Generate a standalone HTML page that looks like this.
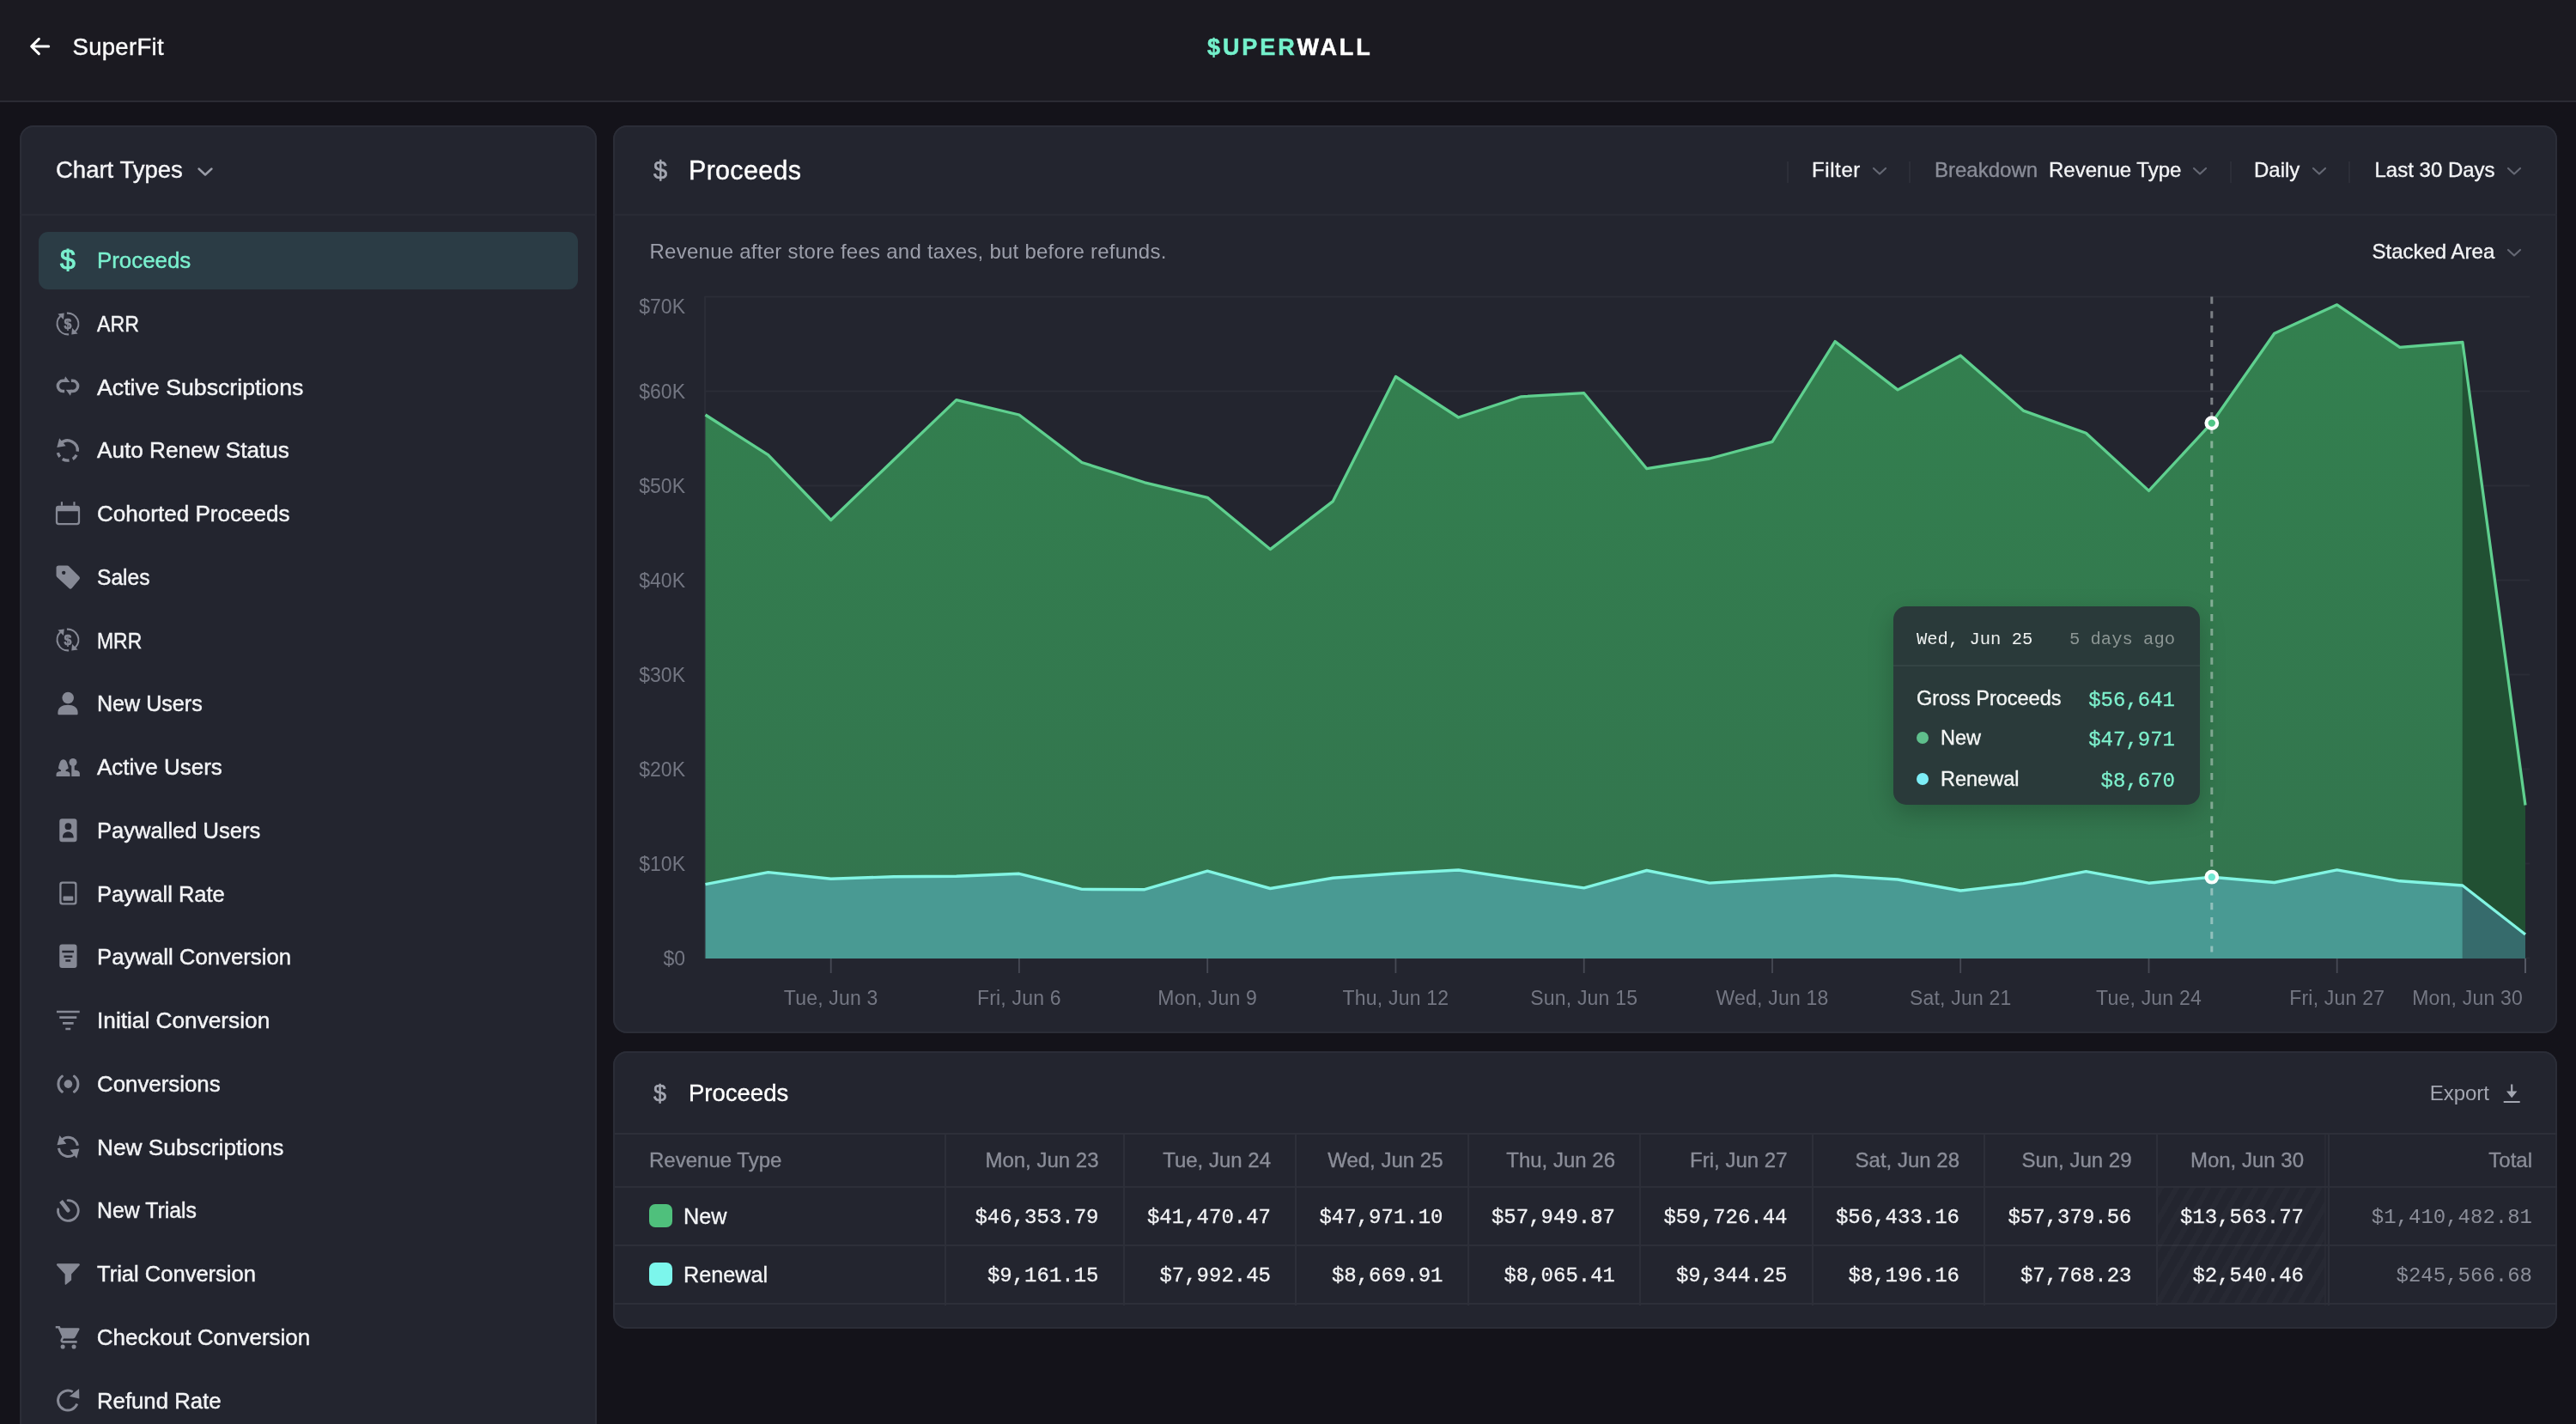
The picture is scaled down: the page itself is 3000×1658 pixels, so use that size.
<!DOCTYPE html>
<html lang="en"><head><meta charset="utf-8"><title>Superwall – Proceeds</title>
<style>
*{box-sizing:border-box;margin:0;padding:0}
html,body{width:3000px;height:1658px;overflow:hidden;background:#14131a;font-family:"Liberation Sans",sans-serif;color:#f3f4f6}
#root{position:absolute;left:0;top:0;width:3000px;height:1658px;overflow:hidden;will-change:transform}
.hdr{position:absolute;left:0;top:0;width:3000px;height:119px;background:#1b1a21;border-bottom:2px solid #2b2b34}
.back{position:absolute;left:30px;top:38px;width:32px;height:32px;color:#fff}
.app{position:absolute;left:84.500px;top:37px;font-size:27.500px;line-height:36px;color:#fafafa;letter-spacing:.3px;-webkit-text-stroke:.4px currentColor}
.logo{position:absolute;left:1406px;top:36px;font-size:27px;line-height:38px;font-weight:bold;letter-spacing:2.900px;color:#fff;white-space:nowrap;-webkit-text-stroke:.5px currentColor}
.logo b{color:#74f0cb}
.panel{position:absolute;background:#23252f;box-shadow:inset 0 0 0 2px #2b2d37;border-radius:16px}
.side{left:23px;top:146px;width:671.500px;height:1560px}
.side .hd{position:absolute;left:0;top:0;width:100%;height:105px;border-bottom:2px solid #292b35}
.side .hd .t{position:absolute;left:42px;top:34px;font-size:27.500px;line-height:36px;color:#f5f5f7;-webkit-text-stroke:.4px currentColor}
.side .hd .chev{position:absolute;left:206px;top:48px;width:20px;height:12px;color:#9a9da8}
.it{position:absolute;left:21.500px;width:628px;height:67px;border-radius:11px}
.it.sel{background:#2b3c45}
.it .ico{position:absolute;left:18px;top:16.500px;width:32px;height:32px;color:#868995}
.it .dol{font-size:32px;line-height:32px;font-weight:normal;-webkit-text-stroke:1px currentColor;color:#7af0ce;text-align:center;top:15.500px;left:18.500px}
.it .lb{position:absolute;left:68.200px;top:14.900px;font-size:26px;line-height:36px;white-space:nowrap;color:#f3f4f6;-webkit-text-stroke:.45px currentColor;transform-origin:0 50%}
.it.sel .lb{color:#7af0ce}
.cp{left:714px;top:146px;width:2264px;height:1057px}
.cp .hd{position:absolute;left:0;top:0;width:100%;height:105px;border-bottom:2px solid #292b35}
.ttl{position:absolute;font-size:30.500px;letter-spacing:.3px;line-height:40px;color:#fff;white-space:nowrap;-webkit-text-stroke:.35px currentColor}
.tdol{position:absolute;font-size:29px;line-height:40px;color:#a4a7b2;-webkit-text-stroke:.6px #a4a7b2}
.ctl{position:absolute;top:33.500px;font-size:24px;line-height:36px;white-space:nowrap;color:#f3f4f6;-webkit-text-stroke:.35px currentColor}
.ctl.g{color:#8a8d98}
.cchev{position:absolute;width:18px;height:11px;color:#656874;margin-top:1px}
.sep{position:absolute;top:42px;width:2px;height:25px;background:#2c2e38}
.desc{position:absolute;left:42.500px;top:128.800px;letter-spacing:.25px;font-size:24px;line-height:36px;color:#9c9fab;white-space:nowrap}
.chart{position:absolute;left:0;top:0}
.ax{font-family:"Liberation Sans",sans-serif;font-size:23px;fill:#737682}
.tip{position:absolute;left:2205px;top:706px;width:357px;height:231px;border-radius:15px;background:#2a3a3a;box-shadow:0 10px 30px rgba(0,0,0,.22)}
.xa{font-size:23px;letter-spacing:.2px;fill:#747783}
.tip .th{position:absolute;left:0;top:0;width:100%;height:70px;border-bottom:2px solid rgba(255,255,255,.05)}
.mono{font-family:"Liberation Mono",monospace}
.tip .d{position:absolute;left:27px;top:23px;font-size:20.500px;line-height:32px;color:#eef1f0;white-space:nowrap}
.tip .ago{position:absolute;right:29px;top:23px;font-size:20.500px;line-height:32px;color:#8c9694;white-space:nowrap}
.tip .r{position:absolute;left:27px;right:29px;height:36px}
.tip .r .l{position:absolute;left:0;top:0;font-size:23.500px;line-height:36px;color:#f4f6f5;white-space:nowrap;-webkit-text-stroke:.35px currentColor}
.tip .r .v{position:absolute;right:0;top:3px;font-size:24px;line-height:36px;color:#7df0cc;white-space:nowrap;-webkit-text-stroke:.3px #7df0cc}
.tip .dot{position:absolute;left:0;top:11px;width:14px;height:14px;border-radius:50%}
.tp{left:714px;top:1224px;width:2264px;height:323px;overflow:hidden}
.vl{position:absolute;top:95px;width:2px;height:201px;background:#2d2f39}
.hl{position:absolute;left:2px;right:0;height:2px;background:#2d2f39}
.c{position:absolute;height:40px;line-height:40px;white-space:nowrap;text-align:right}
.c.th{font-size:24px;color:#8b8e99;-webkit-text-stroke:.35px currentColor}
.c.num{font-family:"Liberation Mono",monospace;font-size:24px;color:#f1f2f4;-webkit-text-stroke:.3px #f1f2f4;margin-top:1px}
.c.num.tot{color:#8b8e99;-webkit-text-stroke:0}
.hatch{position:absolute;background:repeating-linear-gradient(120deg,rgba(255,255,255,.02) 0 6px,rgba(255,255,255,0) 6px 16px)}
.sw{position:absolute;left:42px;width:27px;height:27px;border-radius:7px}
.rl{position:absolute;left:82px;font-size:25.200px;line-height:40px;color:#f3f4f6;-webkit-text-stroke:.35px currentColor}
.exp{position:absolute;right:79px;top:28.500px;font-size:24px;line-height:40px;color:#a4a7b2}
</style></head>
<body>
<div id="root">
<div class="hdr">
<svg class="back" viewBox="0 0 24 24"><path fill="none" stroke="currentColor" stroke-width="2.300" stroke-linecap="round" stroke-linejoin="round" d="M20 12H5.500M11.500 5.500L5 12l6.500 6.500"/></svg>
<div class="app">SuperFit</div>
<div class="logo"><b>$UPER</b>WALL</div>
</div>

<div class="panel side">
<div class="hd"><div class="t">Chart Types</div><svg class="chev" viewBox="0 0 20 12"><path d="M2.500 2.500L10 9.500l7.500-7" fill="none" stroke="currentColor" stroke-width="2.400" stroke-linecap="round" stroke-linejoin="round"/></svg></div>
<div class="it sel" style="top:124.30px"><span class="ico dol">$</span><span class="lb" style="transform:scaleX(0.995)">Proceeds</span></div>
<div class="it" style="top:198.05px"><svg class="ico" viewBox="0 0 24 24"><path fill="none" stroke="currentColor" stroke-width="1.6" stroke-linecap="butt" d="M12.81 21.26A9.3 9.3 0 0 1 5.54 5.31 M11.19 2.74A9.3 9.3 0 0 1 18.46 18.69"/><path fill="currentColor" d="M3.3 3.3L8.8 2.7L8.2 8.2ZM20.7 20.7L15.2 21.3L15.8 15.8Z"/><text x="12" y="16.3" text-anchor="middle" font-family="Liberation Sans, sans-serif" font-weight="bold" font-size="12" fill="currentColor" stroke="currentColor" stroke-width=".4">$</text></svg><span class="lb" style="transform:scaleX(0.891)">ARR</span></div>
<div class="it" style="top:271.80px"><svg class="ico" viewBox="0 0 24 24"><path fill="none" stroke="currentColor" stroke-width="2.6" stroke-linecap="butt" d="M14.9 7H16.2A4.55 4.55 0 0 1 16.2 16.1H14.5 M9.1 16.1H7.8A4.55 4.55 0 0 1 7.8 7H9.5"/><path fill="currentColor" d="M8.2 8.3L9.8 3.1L13.7 8.3ZM15.8 14.8L14.2 20L10.3 14.8Z"/></svg><span class="lb" style="transform:scaleX(1.027)">Active Subscriptions</span></div>
<div class="it" style="top:345.55px"><svg class="ico" viewBox="0 0 24 24"><path fill="none" stroke="currentColor" stroke-width="2.5" stroke-linecap="butt" d="M5.98 5.93A8.7 8.7 0 0 1 20.47 13.16 M19.55 16.35A8.7 8.7 0 0 1 16.28 19.86 M13.16 20.99A8.7 8.7 0 0 1 7.32 19.86 M5.04 17.88A8.7 8.7 0 0 1 3.32 14.36"/><path fill="currentColor" d="M4.6 1.7L2.5 9.8L10.2 8.5Z"/></svg><span class="lb" style="transform:scaleX(1.006)">Auto Renew Status</span></div>
<div class="it" style="top:419.30px"><svg class="ico" viewBox="0 0 24 24"><path fill="currentColor" fill-rule="evenodd" d="M3.9 5.1H20.1A2.5 2.5 0 0 1 22.6 7.6V19.4A2.5 2.5 0 0 1 20.1 21.9H3.9A2.5 2.5 0 0 1 1.4 19.4V7.6A2.5 2.5 0 0 1 3.9 5.1ZM3.1 9.9V19.2A1.1 1.1 0 0 0 4.2 20.3H19.8A1.1 1.1 0 0 0 20.9 19.2V9.9ZM5.9 1.7H7.5V5.2H5.9ZM16.8 1.7H18.4V5.2H16.800Z"/></svg><span class="lb" style="transform:scaleX(1.002)">Cohorted Proceeds</span></div>
<div class="it" style="top:493.05px"><svg class="ico" viewBox="0 0 24 24"><path fill="currentColor" fill-rule="evenodd" d="M4 1.9H11.5A2.2 2.2 0 0 1 13.050 2.550L21.900 11.400A1.9 1.9 0 0 1 21.900 14.100L15.600 21.500A1.9 1.9 0 0 1 12.900 21.600L2.550 12.050A2.2 2.2 0 0 1 1.900 10.500V4A2.1 2.1 0 0 1 4 1.900ZM8.400 6.500A1.650 1.650 0 1 0 8.400 9.800A1.650 1.650 0 1 0 8.400 6.500Z"/></svg><span class="lb" style="transform:scaleX(0.945)">Sales</span></div>
<div class="it" style="top:566.80px"><svg class="ico" viewBox="0 0 24 24"><path fill="none" stroke="currentColor" stroke-width="1.6" stroke-linecap="butt" d="M12.81 21.26A9.3 9.3 0 0 1 5.54 5.31 M11.19 2.74A9.3 9.3 0 0 1 18.46 18.69"/><path fill="currentColor" d="M3.3 3.3L8.8 2.7L8.2 8.2ZM20.7 20.7L15.2 21.3L15.8 15.8Z"/><text x="12" y="16.3" text-anchor="middle" font-family="Liberation Sans, sans-serif" font-weight="bold" font-size="12" fill="currentColor" stroke="currentColor" stroke-width=".4">$</text></svg><span class="lb" style="transform:scaleX(0.882)">MRR</span></div>
<div class="it" style="top:640.55px"><svg class="ico" viewBox="0 0 24 24"><circle cx="12.15" cy="7.1" r="5.1" fill="currentColor"/><path fill="currentColor" d="M3.3 21.2V19.8C3.3 15.9 7 13.4 12 13.4S20.7 15.9 20.7 19.8V21.2A.8 .8 0 0 1 19.9 22H4.1A.8 .8 0 0 1 3.3 21.2Z"/></svg><span class="lb" style="transform:scaleX(0.965)">New Users</span></div>
<div class="it" style="top:714.30px"><svg class="ico" viewBox="0 0 24 24"><path fill="currentColor" d="M8.1 5.4C10.6 5.4 11.6 8.2 12.6 13.2C11.4 14.2 10.6 14.4 10.2 14.6V15.8C12.6 16 13.9 16.9 13.9 18.300V20.2H1.9V18.300C1.9 16.900 3.4 16 6 15.800V14.600C5.4 14.400 4.600 14.200 3.700 13.200C4.600 8.200 5.600 5.400 8.100 5.400Z"/><circle cx="16.5" cy="7.9" r="3.4" fill="currentColor"/><path fill="currentColor" d="M15.2 10.5H17.8V14.6C20.6 14.800 22.4 15.900 22.4 17.600V20.2H15.2Z"/></svg><span class="lb" style="transform:scaleX(0.999)">Active Users</span></div>
<div class="it" style="top:788.05px"><svg class="ico" viewBox="0 0 24 24"><path fill="currentColor" fill-rule="evenodd" d="M7.0 1.6H17.599999999999998A2.3 2.3 0 0 1 19.9 3.9V19.7A2.3 2.3 0 0 1 17.599999999999998 22H7.0A2.3 2.3 0 0 1 4.7 19.7V3.9A2.3 2.3 0 0 1 7.0 1.6ZM12.3 5.5A2.9 2.9 0 1 0 12.3 11.3A2.9 2.9 0 1 0 12.3 5.5ZM7.5 18.4V17.6C7.5 14.8 9.6 13.1 12.3 13.1S17 14.8 17 17.600V18.400Z"/></svg><span class="lb" style="transform:scaleX(0.983)">Paywalled Users</span></div>
<div class="it" style="top:861.80px"><svg class="ico" viewBox="0 0 24 24"><path fill="currentColor" fill-rule="evenodd" d="M7.2 1.9H17.4A2.5 2.5 0 0 1 19.9 4.4V19.6A2.5 2.5 0 0 1 17.4 22.1H7.2A2.5 2.5 0 0 1 4.7 19.6V4.4A2.5 2.5 0 0 1 7.2 1.9ZM7.6000000000000005 3.6H17.0A1.2 1.2 0 0 1 18.2 4.8V19.2A1.2 1.2 0 0 1 17.0 20.4H7.6000000000000005A1.2 1.2 0 0 1 6.4 19.2V4.8A1.2 1.2 0 0 1 7.6000000000000005 3.6ZM8.5 14.7H16.099999999999998A0.6 0.6 0 0 1 16.7 15.299999999999999V17.9A0.6 0.6 0 0 1 16.099999999999998 18.5H8.5A0.6 0.6 0 0 1 7.9 17.9V15.299999999999999A0.6 0.6 0 0 1 8.5 14.7Z"/></svg><span class="lb" style="transform:scaleX(0.98)">Paywall Rate</span></div>
<div class="it" style="top:935.55px"><svg class="ico" viewBox="0 0 24 24"><path fill="currentColor" fill-rule="evenodd" d="M7.0 1.2H17.599999999999998A2.3 2.3 0 0 1 19.9 3.5V19.5A2.3 2.3 0 0 1 17.599999999999998 21.8H7.0A2.3 2.3 0 0 1 4.7 19.5V3.5A2.3 2.3 0 0 1 7.0 1.2ZM7 6.500H17.300V8.500H7ZM8.600 10.800H16V12.800H8.600ZM10 14.400H14.400V16.400H10Z"/></svg><span class="lb" style="transform:scaleX(0.99)">Paywall Conversion</span></div>
<div class="it" style="top:1009.30px"><svg class="ico" viewBox="0 0 24 24"><path fill="currentColor" d="M2.2 3.500H22.300V5.500H2.200ZM4.700 8.450H19.700V10.450H4.700ZM7.500 13.500H17V15.500H7.500ZM10 18.500H14.400V20.500H10Z"/></svg><span class="lb" style="transform:scaleX(1.009)">Initial Conversion</span></div>
<div class="it" style="top:1083.05px"><svg class="ico" viewBox="0 0 24 24"><circle cx="12.3" cy="12.1" r="3.6" fill="currentColor"/><path fill="none" stroke="currentColor" stroke-width="2.3" stroke-linecap="round" d="M7.01 18.88A8.6 8.6 0 0 1 7.01 5.32 M17.59 5.32A8.6 8.6 0 0 1 17.59 18.88"/></svg><span class="lb" style="transform:scaleX(0.994)">Conversions</span></div>
<div class="it" style="top:1156.80px"><svg class="ico" viewBox="0 0 24 24"><path fill="none" stroke="currentColor" stroke-width="2.3" stroke-linecap="butt" d="M5.26 7.85A8.3 8.3 0 0 1 20.52 11.09 M19.34 16.65A8.3 8.3 0 0 1 4.08 13.41"/><path fill="currentColor" d="M13.9 14.9L22 13.9L19.7 22.3ZM10.7 9.600L2.600 10.600L4.900 2.200Z"/></svg><span class="lb" style="transform:scaleX(1.01)">New Subscriptions</span></div>
<div class="it" style="top:1230.55px"><svg class="ico" viewBox="0 0 24 24"><path fill="none" stroke="currentColor" stroke-width="2.1" stroke-linecap="round" d="M11.99 3.51A8.9 8.9 0 1 1 3.49 11.16"/><path fill="currentColor" d="M4.6 5.200L7.400 3L13.700 11.200A1.800 1.800 0 0 1 11 13.500Z"/></svg><span class="lb" style="transform:scaleX(0.956)">New Trials</span></div>
<div class="it" style="top:1304.30px"><svg class="ico" viewBox="0 0 24 24"><path fill="currentColor" d="M3.1 3.2H21.5A.9 .9 0 0 1 22.200 4.700L15.100 12.300V17.600L10.300 21.500A.5 .5 0 0 1 9.500 21.100V12.300L2.400 4.700A.9 .9 0 0 1 3.100 3.200Z"/></svg><span class="lb" style="transform:scaleX(0.982)">Trial Conversion</span></div>
<div class="it" style="top:1378.05px"><svg class="ico" viewBox="0 0 24 24"><path fill="currentColor" d="M7.6 18.300a1.900 1.900 0 1 0 0 3.800 1.900 1.900 0 0 0 0-3.800zM1.300 2.200v2h2.200l3.400 7.400-1.100 2.300c-.7 1.500.3 3.100 1.900 3.100h12.300v-2H7.700c-.2 0-.3-.2-.200-.4l.8-1.500h8.300c.8 0 1.500-.4 1.800-1.100l3.700-6.700c.3-.600-.1-1.300-.8-1.300H5.800l-.9-1.800H1.300zm16 16.100a1.900 1.900 0 1 0 0 3.800 1.900 1.900 0 0 0 0-3.800z"/></svg><span class="lb" style="transform:scaleX(1.0)">Checkout Conversion</span></div>
<div class="it" style="top:1451.80px"><svg class="ico" viewBox="0 0 24 24"><path fill="none" stroke="currentColor" stroke-width="2.2" stroke-linecap="butt" d="M20.08 15.34A8.6 8.6 0 1 1 16.30 4.95"/><path fill="currentColor" d="M13.400 8.800L21.800 2.200L22 10.800Z"/></svg><span class="lb" style="transform:scaleX(0.99)">Refund Rate</span></div>

</div>

<div class="panel cp">
<div class="hd">
<div class="tdol" style="left:47px;top:32px">$</div>
<div class="ttl" style="left:88px;top:31.500px">Proceeds</div>
<div class="sep" style="left:1367px"></div>
<div class="ctl" style="left:1396px;letter-spacing:.6px">Filter</div>
<div class="sep" style="left:1509px"></div>
<div class="ctl g" style="left:1539px">Breakdown</div>
<div class="ctl" style="left:1672px">Revenue Type</div>
<div class="sep" style="left:1883px"></div>
<div class="ctl" style="left:1911px">Daily</div>
<div class="sep" style="left:2021px"></div>
<div class="ctl" style="left:2051.500px">Last 30 Days</div>
</div>
<svg class="cchev" style="left:1466.4px;top:47.2px" viewBox="0 0 18 11"><path d="M2 2l7 6.500L16 2" fill="none" stroke="currentColor" stroke-width="2.200" stroke-linecap="round" stroke-linejoin="round"/></svg><svg class="cchev" style="left:1838.9px;top:47.2px" viewBox="0 0 18 11"><path d="M2 2l7 6.500L16 2" fill="none" stroke="currentColor" stroke-width="2.200" stroke-linecap="round" stroke-linejoin="round"/></svg><svg class="cchev" style="left:1977.9px;top:47.2px" viewBox="0 0 18 11"><path d="M2 2l7 6.500L16 2" fill="none" stroke="currentColor" stroke-width="2.200" stroke-linecap="round" stroke-linejoin="round"/></svg><svg class="cchev" style="left:2204.7px;top:47.2px" viewBox="0 0 18 11"><path d="M2 2l7 6.500L16 2" fill="none" stroke="currentColor" stroke-width="2.200" stroke-linecap="round" stroke-linejoin="round"/></svg><svg class="cchev" style="left:2204.7px;top:142.4px" viewBox="0 0 18 11"><path d="M2 2l7 6.500L16 2" fill="none" stroke="currentColor" stroke-width="2.200" stroke-linecap="round" stroke-linejoin="round"/></svg>
<div class="desc">Revenue after store fees and taxes, but before refunds.</div>
<div class="ctl" style="left:2048.500px;top:129px">Stacked Area</div>
</div>
<svg class="chart" width="3000" height="1658" viewBox="0 0 3000 1658">
<defs>
<linearGradient id="gg" x1="0" y1="345" x2="0" y2="1116" gradientUnits="userSpaceOnUse"><stop offset="0" stop-color="#33804f"/><stop offset="1" stop-color="#33744e"/></linearGradient>
</defs>
<line x1="821" x2="2946" y1="345.5" y2="345.5" stroke="#2b2d37" stroke-width="2"/><line x1="821" x2="2946" y1="455.5" y2="455.5" stroke="#2b2d37" stroke-width="2"/><line x1="821" x2="2946" y1="565.5" y2="565.5" stroke="#2b2d37" stroke-width="2"/><line x1="821" x2="2946" y1="675.5" y2="675.5" stroke="#2b2d37" stroke-width="2"/><line x1="821" x2="2946" y1="785.5" y2="785.5" stroke="#2b2d37" stroke-width="2"/><line x1="821" x2="2946" y1="895.5" y2="895.5" stroke="#2b2d37" stroke-width="2"/><line x1="821" x2="2946" y1="1005.5" y2="1005.5" stroke="#2b2d37" stroke-width="2"/><line x1="821" x2="2946" y1="1115.5" y2="1115.5" stroke="#2b2d37" stroke-width="2"/>
<line x1="821" x2="821" y1="345" y2="1116" stroke="#2b2d37" stroke-width="2"/>
<path d="M821.5,483.0 L894.6,529.7 L967.7,605.5 L1040.8,535.5 L1113.8,465.6 L1186.9,483.0 L1260.0,538.5 L1333.1,561.8 L1406.2,579.3 L1479.3,639.6 L1552.4,583.6 L1625.4,438.5 L1698.5,486.0 L1771.6,461.8 L1844.7,457.7 L1917.8,545.7 L1990.9,534.0 L2064.0,514.3 L2137.1,397.6 L2210.1,453.9 L2283.2,414.0 L2356.3,478.1 L2429.4,504.3 L2502.5,571.4 L2575.6,492.7 L2648.7,388.3 L2721.7,354.8 L2794.8,404.3 L2867.9,398.5 L2867.9,1031.0 L2794.8,1025.8 L2721.7,1012.9 L2648.7,1027.5 L2575.6,1021.2 L2502.5,1028.2 L2429.4,1014.6 L2356.3,1028.6 L2283.2,1037.0 L2210.1,1024.0 L2137.1,1019.4 L2064.0,1023.7 L1990.9,1028.1 L1917.8,1013.5 L1844.7,1033.9 L1771.6,1023.7 L1698.5,1013.0 L1625.4,1017.0 L1552.4,1022.3 L1479.3,1034.5 L1406.2,1014.1 L1333.1,1035.7 L1260.0,1035.4 L1186.9,1017.3 L1113.8,1020.2 L1040.8,1020.8 L967.7,1023.2 L894.6,1015.6 L821.5,1029.6 Z" fill="url(#gg)"/>
<path d="M2867.9,398.5 L2941.0,937.5 L2941.0,1088.0 L2867.9,1031.0 Z" fill="#215033"/>
<path d="M821.5,1116.0 L821.5,1029.6 L894.6,1015.6 L967.7,1023.2 L1040.8,1020.8 L1113.8,1020.2 L1186.9,1017.3 L1260.0,1035.4 L1333.1,1035.7 L1406.2,1014.1 L1479.3,1034.5 L1552.4,1022.3 L1625.4,1017.0 L1698.5,1013.0 L1771.6,1023.7 L1844.7,1033.9 L1917.8,1013.5 L1990.9,1028.1 L2064.0,1023.7 L2137.1,1019.4 L2210.1,1024.0 L2283.2,1037.0 L2356.3,1028.6 L2429.4,1014.6 L2502.5,1028.2 L2575.6,1021.2 L2648.7,1027.5 L2721.7,1012.9 L2794.8,1025.8 L2867.9,1031.0 L2867.9,1116.0 Z" fill="#499a93"/>
<path d="M2867.9,1116.0 L2867.9,1031.0 L2941.0,1088.0 L2941.0,1116.0 Z" fill="#366b6c"/>
<polyline points="821.5,483.0 894.6,529.7 967.7,605.5 1040.8,535.5 1113.8,465.6 1186.9,483.0 1260.0,538.5 1333.1,561.8 1406.2,579.3 1479.3,639.6 1552.4,583.6 1625.4,438.5 1698.5,486.0 1771.6,461.8 1844.7,457.7 1917.8,545.7 1990.9,534.0 2064.0,514.3 2137.1,397.6 2210.1,453.9 2283.2,414.0 2356.3,478.1 2429.4,504.3 2502.5,571.4 2575.6,492.7 2648.7,388.3 2721.7,354.8 2794.8,404.3 2867.9,398.5 2941.0,937.5" fill="none" stroke="#5fd08f" stroke-width="3.300" stroke-linejoin="round"/>
<polyline points="821.5,1029.6 894.6,1015.6 967.7,1023.2 1040.8,1020.8 1113.8,1020.2 1186.9,1017.3 1260.0,1035.4 1333.1,1035.7 1406.2,1014.1 1479.3,1034.5 1552.4,1022.3 1625.4,1017.0 1698.5,1013.0 1771.6,1023.7 1844.7,1033.9 1917.8,1013.5 1990.9,1028.1 2064.0,1023.7 2137.1,1019.4 2210.1,1024.0 2283.2,1037.0 2356.3,1028.6 2429.4,1014.6 2502.5,1028.2 2575.6,1021.2 2648.7,1027.5 2721.7,1012.9 2794.8,1025.8 2867.9,1031.0 2941.0,1088.0" fill="none" stroke="#82f5e3" stroke-width="3.400" stroke-linejoin="round"/>
<line x1="2575.800" x2="2575.800" y1="345.500" y2="1108.500" stroke="#e8f0f0" stroke-opacity="0.45" stroke-width="3" stroke-dasharray="8.200 8.600"/>
<circle cx="2575.800" cy="492.600" r="6.300" fill="#4fc585" stroke="#fbfffd" stroke-width="4.200"/>
<circle cx="2575.800" cy="1021.200" r="6.300" fill="#6fe8d2" stroke="#fbfffd" stroke-width="4.200"/>
<line x1="967.7" x2="967.7" y1="1116" y2="1133" stroke="#474a55" stroke-width="1.800"/><line x1="1186.9" x2="1186.9" y1="1116" y2="1133" stroke="#474a55" stroke-width="1.800"/><line x1="1406.2" x2="1406.2" y1="1116" y2="1133" stroke="#474a55" stroke-width="1.800"/><line x1="1625.4" x2="1625.4" y1="1116" y2="1133" stroke="#474a55" stroke-width="1.800"/><line x1="1844.7" x2="1844.7" y1="1116" y2="1133" stroke="#474a55" stroke-width="1.800"/><line x1="2064.0" x2="2064.0" y1="1116" y2="1133" stroke="#474a55" stroke-width="1.800"/><line x1="2283.2" x2="2283.2" y1="1116" y2="1133" stroke="#474a55" stroke-width="1.800"/><line x1="2502.5" x2="2502.5" y1="1116" y2="1133" stroke="#474a55" stroke-width="1.800"/><line x1="2721.7" x2="2721.7" y1="1116" y2="1133" stroke="#474a55" stroke-width="1.800"/><line x1="2941" x2="2941" y1="1116" y2="1133" stroke="#555864" stroke-width="2"/>
<text x="798" y="364.5" text-anchor="end" class="ax">$70K</text><text x="798" y="463.5" text-anchor="end" class="ax">$60K</text><text x="798" y="573.5" text-anchor="end" class="ax">$50K</text><text x="798" y="683.5" text-anchor="end" class="ax">$40K</text><text x="798" y="793.5" text-anchor="end" class="ax">$30K</text><text x="798" y="903.5" text-anchor="end" class="ax">$20K</text><text x="798" y="1013.5" text-anchor="end" class="ax">$10K</text><text x="798" y="1123.5" text-anchor="end" class="ax">$0</text>
<text x="967.7" y="1170" text-anchor="middle" class="ax xa">Tue, Jun 3</text><text x="1186.9" y="1170" text-anchor="middle" class="ax xa">Fri, Jun 6</text><text x="1406.2" y="1170" text-anchor="middle" class="ax xa">Mon, Jun 9</text><text x="1625.4" y="1170" text-anchor="middle" class="ax xa">Thu, Jun 12</text><text x="1844.7" y="1170" text-anchor="middle" class="ax xa">Sun, Jun 15</text><text x="2064.0" y="1170" text-anchor="middle" class="ax xa">Wed, Jun 18</text><text x="2283.2" y="1170" text-anchor="middle" class="ax xa">Sat, Jun 21</text><text x="2502.5" y="1170" text-anchor="middle" class="ax xa">Tue, Jun 24</text><text x="2721.7" y="1170" text-anchor="middle" class="ax xa">Fri, Jun 27</text><text x="2938" y="1170" text-anchor="end" class="ax xa">Mon, Jun 30</text>
</svg>
<div class="tip">
<div class="th"><div class="d mono">Wed, Jun 25</div><div class="ago mono">5 days ago</div></div>
<div class="r" style="top:89px"><div class="l">Gross Proceeds</div><div class="v mono">$56,641</div></div>
<div class="r" style="top:135px"><div class="dot" style="background:#5fbf8c"></div><div class="l" style="left:28px">New</div><div class="v mono">$47,971</div></div>
<div class="r" style="top:183px"><div class="dot" style="background:#7deef6"></div><div class="l" style="left:28px">Renewal</div><div class="v mono">$8,670</div></div>
</div>

<div class="panel tp">
<div class="tdol" style="left:47px;top:28.500px;font-size:27px">$</div>
<div class="ttl" style="left:88px;top:29px;font-size:27.500px;letter-spacing:0">Proceeds</div>
<div class="exp">Export</div>
<svg style="position:absolute;left:2195px;top:32px;width:32px;height:32px;color:#a4a7b2" viewBox="0 0 32 32"><path fill="none" stroke="currentColor" stroke-width="2.200" d="M16.200 6.500v13M6.700 27h19"/><path fill="currentColor" d="M10 14.500h12.400l-6.200 7.800z"/></svg>
<div class="vl" style="left:386.0px"></div><div class="vl" style="left:593.5px"></div><div class="vl" style="left:794.0px"></div><div class="vl" style="left:994.5px"></div><div class="vl" style="left:1195.0px"></div><div class="vl" style="left:1395.5px"></div><div class="vl" style="left:1596.0px"></div><div class="vl" style="left:1796.5px"></div><div class="vl" style="left:1997.0px"></div><div class="vl" style="left:1993.0px;opacity:.6"></div><div class="hl" style="top:95.0px"></div><div class="hl" style="top:156.5px"></div><div class="hl" style="top:224.5px"></div><div class="hl" style="top:293.0px"></div><div class="hatch" style="left:1798.5px;top:158.5px;width:194.5px;height:134.5px"></div><div class="c th" style="right:1698.5px;top:107.0px">Mon, Jun 23</div><div class="c num" style="right:1698.5px;top:172.5px">$46,353.79</div><div class="c num" style="right:1698.5px;top:240.5px">$9,161.15</div><div class="c th" style="right:1498.0px;top:107.0px">Tue, Jun 24</div><div class="c num" style="right:1498.0px;top:172.5px">$41,470.47</div><div class="c num" style="right:1498.0px;top:240.5px">$7,992.45</div><div class="c th" style="right:1297.5px;top:107.0px">Wed, Jun 25</div><div class="c num" style="right:1297.5px;top:172.5px">$47,971.10</div><div class="c num" style="right:1297.5px;top:240.5px">$8,669.91</div><div class="c th" style="right:1097.0px;top:107.0px">Thu, Jun 26</div><div class="c num" style="right:1097.0px;top:172.5px">$57,949.87</div><div class="c num" style="right:1097.0px;top:240.5px">$8,065.41</div><div class="c th" style="right:896.5px;top:107.0px">Fri, Jun 27</div><div class="c num" style="right:896.5px;top:172.5px">$59,726.44</div><div class="c num" style="right:896.5px;top:240.5px">$9,344.25</div><div class="c th" style="right:696.0px;top:107.0px">Sat, Jun 28</div><div class="c num" style="right:696.0px;top:172.5px">$56,433.16</div><div class="c num" style="right:696.0px;top:240.5px">$8,196.16</div><div class="c th" style="right:495.5px;top:107.0px">Sun, Jun 29</div><div class="c num" style="right:495.5px;top:172.5px">$57,379.56</div><div class="c num" style="right:495.5px;top:240.5px">$7,768.23</div><div class="c th" style="right:295.0px;top:107.0px">Mon, Jun 30</div><div class="c num" style="right:295.0px;top:172.5px">$13,563.77</div><div class="c num" style="right:295.0px;top:240.5px">$2,540.46</div><div class="c th" style="right:29.0px;top:107.0px">Total</div><div class="c num tot" style="right:29.0px;top:172.5px">$1,410,482.81</div><div class="c num tot" style="right:29.0px;top:240.5px">$245,566.68</div>
<div class="c th" style="left:42px;top:107px;text-align:left">Revenue Type</div>
<div class="sw" style="top:178.0px;background:#4fc07c"></div><div class="rl" style="top:171.5px">New</div>
<div class="sw" style="top:246.0px;background:#7cf6ec"></div><div class="rl" style="top:239.5px">Renewal</div>
</div>
</div>
</body></html>
